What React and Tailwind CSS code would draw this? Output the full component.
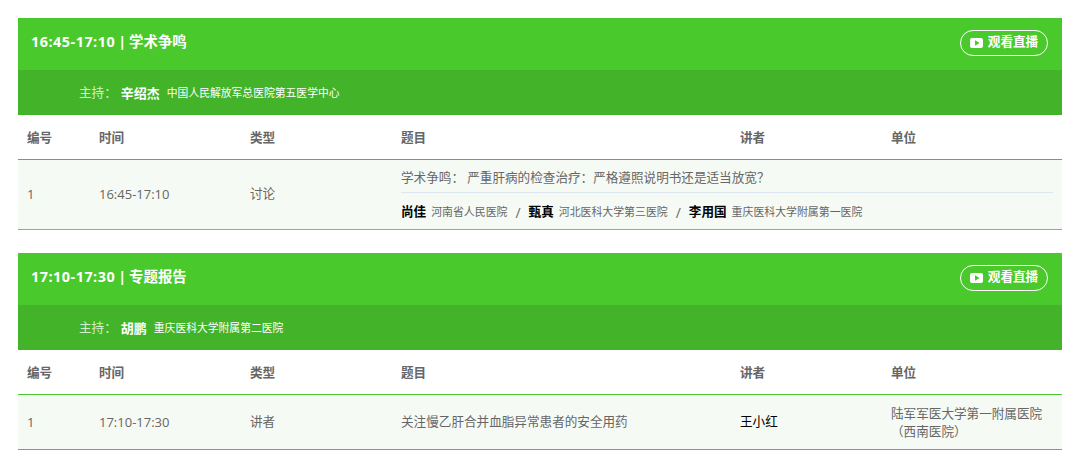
const font = "font-['Open_Sans','Noto_Sans_CJK_SC',sans-serif]";

function Play() {
  return (
    <svg width="13" height="10" viewBox="0 0 13 10" className="mr-[5px] shrink-0">
      <path d="M2 0h9a2 2 0 0 1 2 2v6a2 2 0 0 1-2 2H2a2 2 0 0 1-2-2V2a2 2 0 0 1 2-2z" fill="#fff" />
      <path d="M5 2.2v5.6l4.6-2.8z" fill="#49c92c" />
    </svg>
  );
}

const cols = "grid grid-cols-[72px_151px_151px_339px_151px_180px]";

function Section({ time, title, hostName, hostOrg, last, children }) {
  return (
    <section className={last ? "" : "mb-[23px]"}>
      <div className="h-[52px] bg-[#49c92c] flex items-center justify-between pl-[13px] pr-[14px]">
        <h2 className="text-[14.4px] font-bold text-white leading-[48px] h-[48px] self-start">
          <span className="tracking-[0.5px]">{time}</span>
          <span className="mx-[3px]">|</span>
          {title}
        </h2>
        <a className="h-[26px] -mt-[3px] w-[88px] rounded-[13px] border border-white text-white text-[12.6px] font-bold flex items-center justify-center">
          <Play />观看直播
        </a>
      </div>
      <div className="h-[45px] bg-[#43b329] flex items-center pl-[61px] pt-[2px] text-white">
        <span className="text-[12.6px] text-[#d3f0cc] mr-[4px]">主持：</span>
        <span className="text-[13px] font-bold mr-[7px]">{hostName}</span>
        <span className="text-[10.8px]">{hostOrg}</span>
      </div>
      <div className={`${cols} h-[44px] pt-[2px] items-center text-[12.6px] font-bold text-[#666] [&>div]:px-[9px]`}>
        <div>编号</div><div>时间</div><div>类型</div><div>题目</div><div>讲者</div><div>单位</div>
      </div>
      {children}
    </section>
  );
}

function Guest({ name, org }) {
  return (
    <>
      <span className="text-[12.6px] font-bold text-black">{name}</span>
      <span className="text-[10.9px] text-[#666] ml-[5px]">{org}</span>
    </>
  );
}

export default function App() {
  return (
    <div className={`${font} bg-white min-h-[464px] pt-[18px] px-[18px] w-[1079px] overflow-hidden`}>
      <div className="w-[1044px]">
        <Section time="16:45-17:10" title="学术争鸣" hostName="辛绍杰" hostOrg="中国人民解放军总医院第五医学中心">
          <div className={`${cols} h-[71px] items-center bg-[#f6faf4] border-y border-t-[#5cb04a] border-b-[#8fae88] text-[12.6px] text-[#666] [&>div]:pl-[9px]`}>
            <div className="text-[13px]">1</div>
            <div className="text-[13px]">16:45-17:10</div>
            <div>讨论</div>
            <div className="col-span-3 !pr-[9px] h-full flex flex-col">
              <div className="h-[33px] pt-[5px] border-b border-[#dbe6ee] flex items-center">学术争鸣： 严重肝病的检查治疗：严格遵照说明书还是适当放宽？</div>
              <div className="flex-1 flex items-center pt-[3px]">
                <Guest name="尚佳" org="河南省人民医院" />
                <span className="mx-[8px] text-[14px]">/</span>
                <Guest name="甄真" org="河北医科大学第三医院" />
                <span className="mx-[8px] text-[14px]">/</span>
                <Guest name="李用国" org="重庆医科大学附属第一医院" />
              </div>
            </div>
          </div>
        </Section>
        <Section time="17:10-17:30" title="专题报告" hostName="胡鹏" hostOrg="重庆医科大学附属第二医院" last>
          <div className={`${cols} h-[56px] pt-[1px] items-center bg-[#f6faf4] border-y border-[#49c92c] text-[12.6px] text-[#666] [&>div]:pl-[9px]`}>
            <div className="text-[13px]">1</div>
            <div className="text-[13px]">17:10-17:30</div>
            <div>讲者</div>
            <div>关注慢乙肝合并血脂异常患者的安全用药</div>
            <div className="text-black">王小红</div>
            <div className="leading-[18px] !pr-[10px]">陆军军医大学第一附属医院（西南医院）</div>
          </div>
        </Section>
      </div>
    </div>
  );
}
